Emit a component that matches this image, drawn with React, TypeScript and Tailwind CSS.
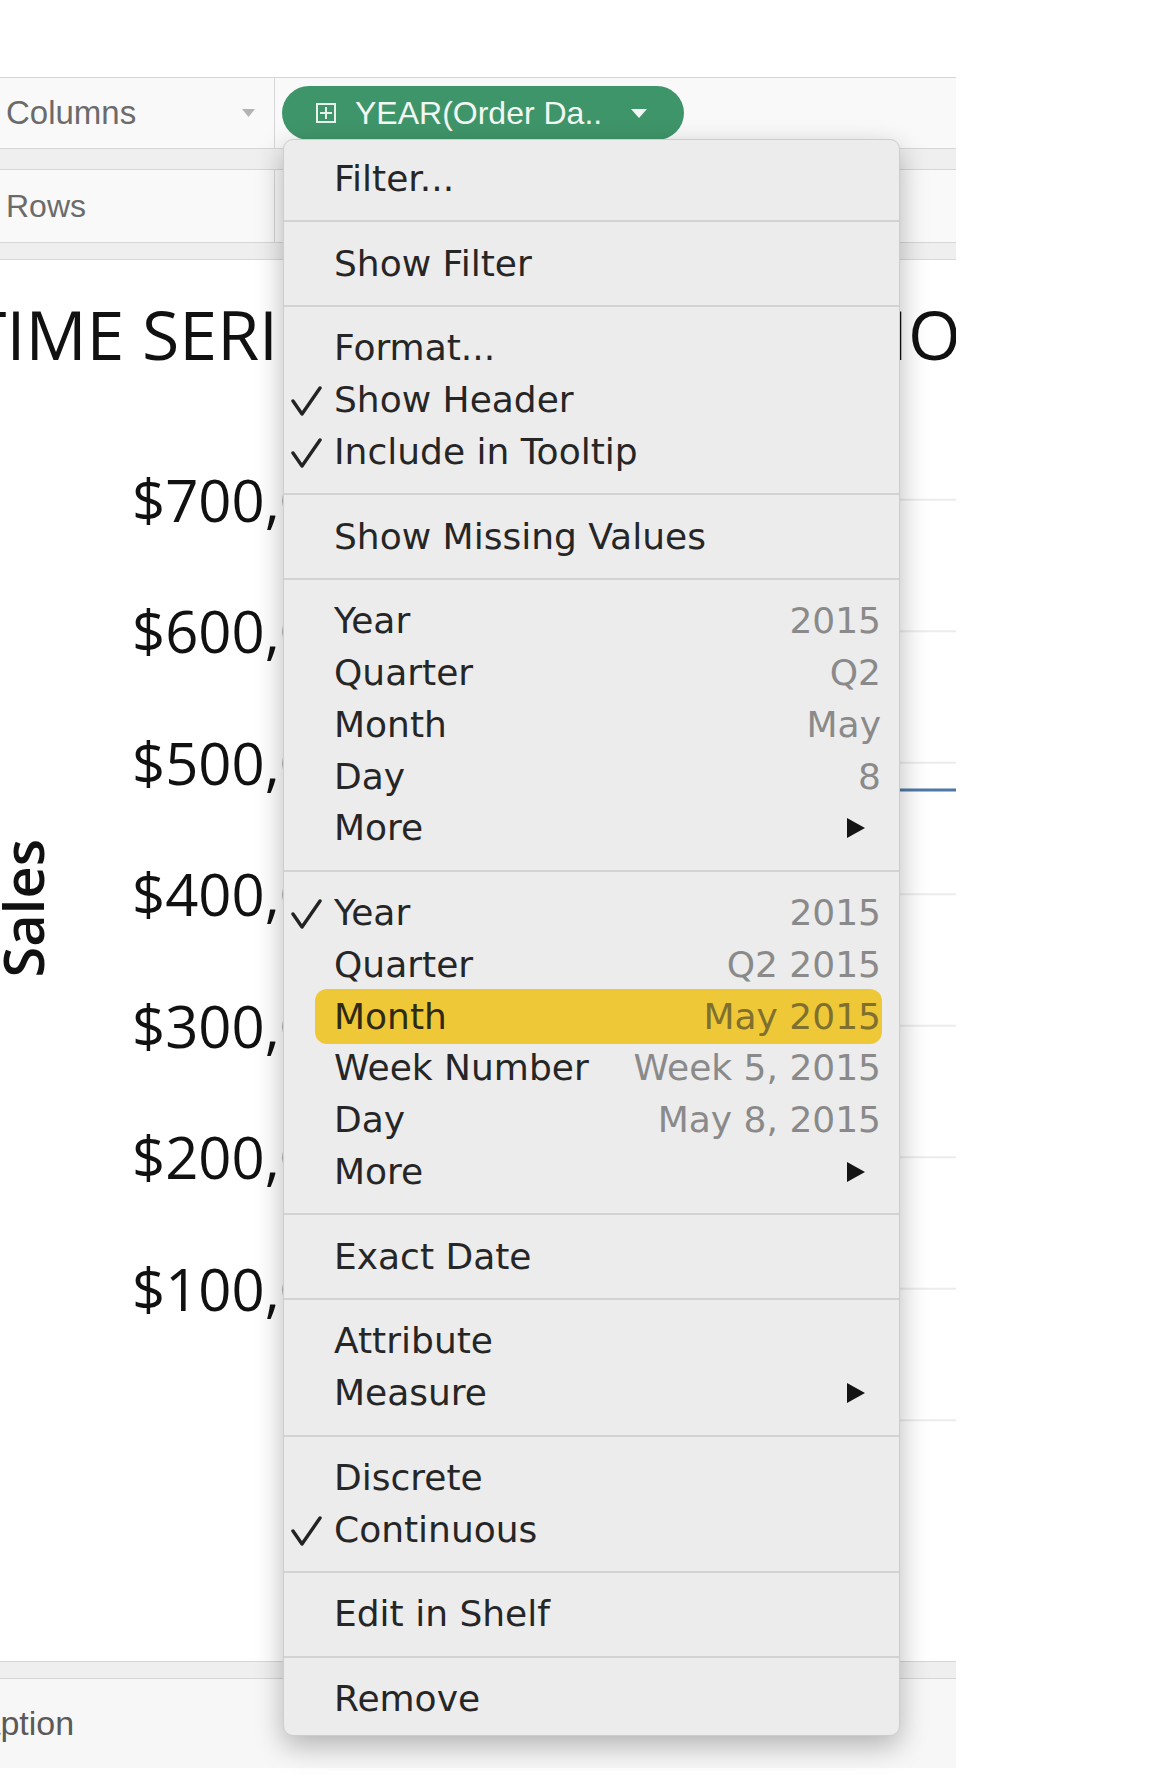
import React from 'react';

type Item = {
  label: string;
  value?: string;
  checked?: boolean;
  sub?: boolean;
  highlight?: boolean;
};

const sections: Item[][] = [
  [{ label: 'Filter...' }],
  [{ label: 'Show Filter' }],
  [{ label: 'Format...' }, { label: 'Show Header', checked: true }, { label: 'Include in Tooltip', checked: true }],
  [{ label: 'Show Missing Values' }],
  [
    { label: 'Year', value: '2015' },
    { label: 'Quarter', value: 'Q2' },
    { label: 'Month', value: 'May' },
    { label: 'Day', value: '8' },
    { label: 'More', sub: true },
  ],
  [
    { label: 'Year', value: '2015', checked: true },
    { label: 'Quarter', value: 'Q2 2015' },
    { label: 'Month', value: 'May 2015', highlight: true },
    { label: 'Week Number', value: 'Week 5, 2015' },
    { label: 'Day', value: 'May 8, 2015' },
    { label: 'More', sub: true },
  ],
  [{ label: 'Exact Date' }],
  [{ label: 'Attribute' }, { label: 'Measure', sub: true }],
  [{ label: 'Discrete' }, { label: 'Continuous', checked: true }],
  [{ label: 'Edit in Shelf' }],
  [{ label: 'Remove' }],
];

const axisLabels = ['$700,000', '$600,000', '$500,000', '$400,000', '$300,000', '$200,000', '$100,000', ''];

const SubArrow = () => (
  <svg width="20" height="22" viewBox="0 0 20 22" className="mr-[15px] shrink-0">
    <polygon points="1,1 19,11 1,21" fill="#141414" />
  </svg>
);

const Check = () => (
  <svg width="32" height="32" viewBox="0 0 32 32" className="mt-[2px]">
    <path d="M2 16 L11 29 L29 3" fill="none" stroke="#232323" strokeWidth="3.4" strokeLinecap="round" strokeLinejoin="round" />
  </svg>
);

const MenuRow: React.FC<{ item: Item }> = ({ item }) => {
  if (item.highlight) {
    return (
      <div className="flex h-[51.75px] items-center pl-[31px] pr-[17px]">
        <div className="flex h-[55px] flex-1 items-center rounded-[12px] bg-[#efc838] pl-[19px] pr-[1px]">
          <span className="flex-1 text-[#2f2a14]">{item.label}</span>
          <span className="text-[#7f7030]">{item.value}</span>
        </div>
      </div>
    );
  }
  return (
    <div className="flex h-[51.75px] items-center pl-[7px] pr-[18px]">
      <span className="flex w-[43px] shrink-0 items-center">{item.checked && <Check />}</span>
      <span className="flex-1 text-[#262626]">{item.label}</span>
      {item.value && <span className="text-[#8a8a8a]">{item.value}</span>}
      {item.sub && <SubArrow />}
    </div>
  );
};

const ContextMenu = () => (
  <div
    className="absolute left-[283px] top-[139px] z-20 w-[617px] rounded-[10px] border border-[#cdcdcd] bg-[#ececec] pb-[10px] pt-[13px] text-[36px] leading-none shadow-[0_10px_28px_rgba(0,0,0,0.28)]"
    style={{ fontFamily: '"DejaVu Sans", sans-serif' }}
  >
    {sections.map((sec, i) => (
      <div key={i}>
        {i > 0 && (
          <div className="flex h-[33px] items-center">
            <div className="h-[2px] w-full bg-[#d3d3d3]" />
          </div>
        )}
        {sec.map((item, j) => (
          <MenuRow key={j} item={item} />
        ))}
      </div>
    ))}
  </div>
);

const Pill = () => (
  <div className="flex h-[54px] w-[402px] items-center rounded-full bg-[#3f956a] pl-[34px] text-[32px] text-[#f2f7f3]">
    <svg width="20" height="20" viewBox="0 0 20 20" className="mr-[19px] shrink-0">
      <rect x="1" y="1" width="18" height="18" fill="none" stroke="#e8f2ec" strokeWidth="2" />
      <line x1="10" y1="4" x2="10" y2="16" stroke="#e8f2ec" strokeWidth="2" />
      <line x1="4" y1="10" x2="16" y2="10" stroke="#e8f2ec" strokeWidth="2" />
    </svg>
    <span className="flex-1 whitespace-nowrap">YEAR(Order Da..</span>
    <svg width="18" height="12" viewBox="0 0 18 12" className="mr-[36px] shrink-0">
      <polygon points="1,2 17,2 9,11" fill="#f2f7f3" />
    </svg>
  </div>
);

const Chart = () => {
  const gy = (i: number) => 65.75 + i * 131.5;
  return (
    <div className="flex h-[1401px] flex-col bg-white" style={{ fontFamily: '"Open Sans", sans-serif' }}>
      <div className="flex justify-between whitespace-nowrap pt-[40px] text-[68px] leading-none text-[#111]">
        <span className="-ml-[31px]">TIME SERIES SCENARIO</span>
        <span className="-mr-[5px] bg-white">IO</span>
      </div>
      <div className="mt-[66px] flex">
        <div className="-ml-[6px] flex w-[138px] items-start justify-start pt-[405px]">
          <span className="rotate-180 text-[56px] font-semibold leading-none text-[#111] [writing-mode:vertical-rl]">
            Sales
          </span>
        </div>
        <div className="flex w-[246px] flex-col">
          {axisLabels.map((l, i) => (
            <div key={i} className="flex h-[131.5px] items-center whitespace-nowrap text-[58px] leading-none text-[#111]">
              {l}
            </div>
          ))}
        </div>
        <svg width="578" height="1052" viewBox="0 0 578 1052" className="shrink-0">
          {axisLabels.map((_, i) => (
            <line key={i} x1="0" y1={gy(i)} x2="578" y2={gy(i)} stroke="#ececec" strokeWidth="2" />
          ))}
          <polyline
            points="10,700 90,620 170,560 250,600 330,470 410,420 470,380 520,356 578,356"
            fill="none"
            stroke="#4e79a7"
            strokeWidth="3"
          />
        </svg>
      </div>
    </div>
  );
};

export default function App() {
  return (
    <div className="relative h-[1791px] w-[1170px] overflow-hidden bg-white">
      <div className="w-[956px] overflow-hidden" style={{ fontFamily: '"Liberation Sans", Arial, sans-serif' }}>
        <div className="h-[77px] bg-white" />
        <div className="flex h-[72px] border-y border-[#d6d6d6] bg-[#f9f9f9]">
          <div className="flex w-[275px] items-center justify-between border-r border-[#d6d6d6] pl-[6px] pr-[19px] text-[33px] text-[#6b6b6b]">
            <span>Columns</span>
            <svg width="13" height="8" viewBox="0 0 13 8">
              <polygon points="0,0 13,0 6.5,8" fill="#b3b3b3" />
            </svg>
          </div>
          <div className="flex flex-1 items-center pl-[7px]">
            <Pill />
          </div>
        </div>
        <div className="h-[20px] bg-[#efefef]" />
        <div className="flex h-[74px] border-y border-[#d6d6d6] bg-[#f9f9f9]">
          <div className="flex w-[275px] items-center border-r border-[#d6d6d6] pl-[6px] text-[32px] text-[#6b6b6b]">
            <span>Rows</span>
          </div>
          <div className="flex-1" />
        </div>
        <div className="h-[17px] border-b border-[#d9d9d9] bg-[#efefef]" />
        <Chart />
        <div className="h-[18px] border-y border-[#d6d6d6] bg-[#efefef]" />
        <div className="flex h-[89px] items-center bg-[#f7f7f7] text-[34px] text-[#5a5a5a]">
          <span className="-ml-[43px]">Caption</span>
        </div>
      </div>
      <ContextMenu />
    </div>
  );
}
